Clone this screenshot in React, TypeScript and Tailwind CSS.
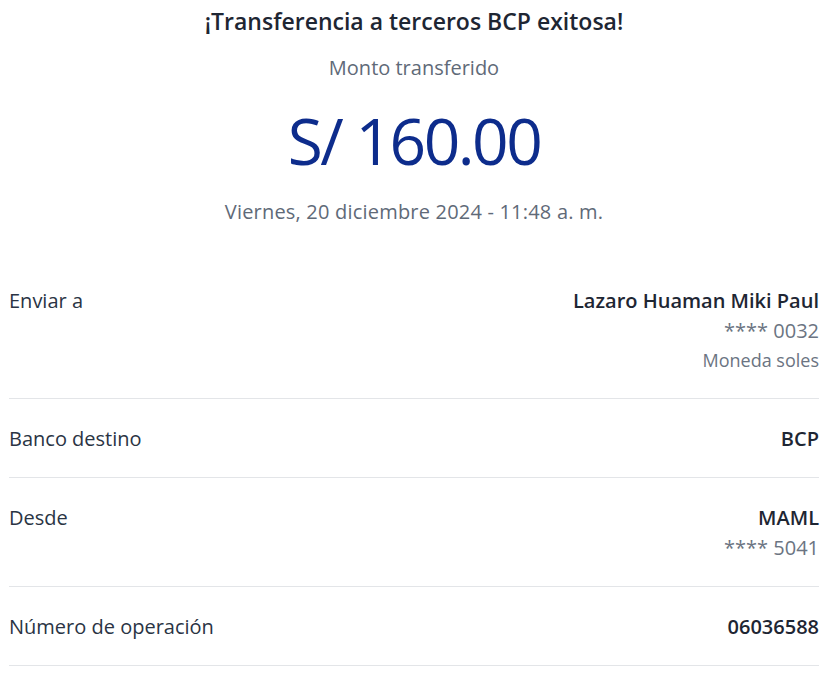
import React from "react";

type Row = {
  label: string;
  value: string;
  extra?: { text: string; small?: boolean }[];
};

const rows: Row[] = [
  {
    label: "Enviar a",
    value: "Lazaro Huaman Miki Paul",
    extra: [{ text: "**** 0032" }, { text: "Moneda soles", small: true }],
  },
  { label: "Banco destino", value: "BCP" },
  { label: "Desde", value: "MAML", extra: [{ text: "**** 5041" }] },
  { label: "Número de operación", value: "06036588" },
];

export default function App() {
  return (
    <div className="min-h-screen bg-white text-[#1f2a3a] font-['Open_Sans','Noto_Sans',sans-serif]">
      <div className="pl-[9px] pr-[11px]">
        {/* header */}
        <div className="flex flex-col items-center">
          <h1 className="pt-[7px] text-[23px] leading-[28px] font-semibold text-[#1e2633]">
            ¡Transferencia a terceros BCP exitosa!
          </h1>
          <p className="mt-[19px] text-[20px] leading-[28px] text-[#5f6a78]">Monto transferido</p>
          <p className="mt-[19px] text-[64px] leading-[80px] tracking-[-2.5px] text-[#0d2c8c]">S/ 160.00</p>
          <p className="mt-[17px] text-[20px] leading-[28px] tracking-[0.2px] text-[#5f6a78]">
            Viernes, 20 diciembre 2024 - 11:48 a. m.
          </p>
        </div>

        {/* detail rows */}
        <div className="mt-[35px]">
          {rows.map((row) => (
            <div
              key={row.label}
              className="flex justify-between pt-[25px] pb-[23px] border-b border-[#e3e5e8]"
            >
              <span className="text-[20px] leading-[30px] text-[#2a3444]">{row.label}</span>
              <div className="flex flex-col items-end">
                <span className="text-[20px] leading-[30px] font-semibold text-[#1e2633]">{row.value}</span>
                {row.extra?.map((e) => (
                  <span
                    key={e.text}
                    className={
                      e.small
                        ? "text-[18px] leading-[29px] text-[#6b7482]"
                        : "text-[20px] leading-[30px] text-[#6b7482]"
                    }
                  >
                    {e.text}
                  </span>
                ))}
              </div>
            </div>
          ))}
        </div>
      </div>
    </div>
  );
}
